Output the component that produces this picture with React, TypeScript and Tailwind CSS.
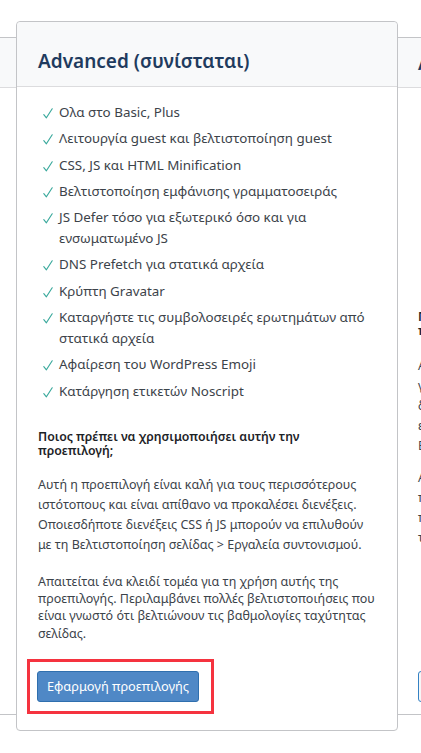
import React from "react";

const font = { fontFamily: '"Noto Sans", "Open Sans", sans-serif' };

type Item = string[];

const mainItems: Item[] = [
  ["Ολα στο Basic, Plus"],
  ["Λειτουργία guest και βελτιστοποίηση guest"],
  ["CSS, JS και HTML Minification"],
  ["Βελτιστοποίηση εμφάνισης γραμματοσειράς"],
  ["JS Defer τόσο για εξωτερικό όσο και για", "ενσωματωμένο JS"],
  ["DNS Prefetch για στατικά αρχεία"],
  ["Κρύπτη Gravatar"],
  ["Καταργήστε τις συμβολοσειρές ερωτημάτων από", "στατικά αρχεία"],
  ["Αφαίρεση του WordPress Emoji"],
  ["Κατάργηση ετικετών Noscript"],
];

const rightItems: Item[] = [
  ["Ολα στο Advanced, Plus"],
  ["Συνδυασμός CSS και JS"],
  ["Asynchronous CSS Loading"],
  ["Lazy Load για εικόνες"],
  ["Lazy Load για iframes"],
  ["Αφαίρεση Query Strings"],
  ["Κατάργηση WP Emoji"],
];

function Check() {
  return (
    <svg width="10" height="11" viewBox="0 0 10 11" className="mt-[6px]" fill="none">
      <path d="M0.8 6.6 L3.4 9.8 L9.2 0.8" stroke="#3aa99c" strokeWidth="1.15" strokeLinecap="round" strokeLinejoin="round" />
    </svg>
  );
}

function CheckList({ items }: { items: Item[] }) {
  return (
    <ul className="flex flex-col gap-[5.3px]">
      {items.map((lines) => (
        <li key={lines[0]} className="flex text-[13.4px] leading-[21px] text-[#3c434a]">
          <span className="flex w-[21px] shrink-0 pl-[5px]">
            <Check />
          </span>
          <span className="whitespace-nowrap">
            {lines.map((l, i) => (
              <React.Fragment key={i}>
                {i > 0 && <br />}
                {l}
              </React.Fragment>
            ))}
          </span>
        </li>
      ))}
    </ul>
  );
}

function Lines({ lines, className }: { lines: string[]; className: string }) {
  return (
    <p className={className}>
      {lines.map((l, i) => (
        <React.Fragment key={i}>
          {i > 0 && <br />}
          {l}
        </React.Fragment>
      ))}
    </p>
  );
}

const headingCls = "whitespace-nowrap text-[12.3px] font-semibold leading-[14.5px] text-[#1d2327]";
const paraCls = "whitespace-nowrap text-[12.5px] leading-[20px] text-[#3c434a]";
const para2Cls = "whitespace-nowrap text-[12.5px] leading-[17.4px] text-[#3c434a]";

function SideCard({ side }: { side: "left" | "right" }) {
  const isRight = side === "right";
  return (
    <div
      className={`mt-[16px] flex h-[678px] w-[382px] shrink-0 flex-col border-y border-[#c3c4c7] bg-white ${
        isRight ? "" : "ml-[-366px]"
      }`}
    >
      <div className="flex h-[50px] shrink-0 items-center border-b border-[#dcdcde] bg-[#f8f9fa] pl-[20px]">
        <h2 className="whitespace-nowrap text-[19px] font-semibold leading-[28px] text-[#1f3b5e]">
          {isRight ? "Aggressive (μπορεί να προκαλέσει διενέξεις)" : "Basic"}
        </h2>
      </div>
      <div className="flex min-h-0 flex-1 flex-col pl-[20px] pr-[20px] pt-[15px]">
        <CheckList items={rightItems} />
        <Lines className={`mt-[28px] ${headingCls}`} lines={["Ποιος πρέπει να χρησιμοποιήσει αυτήν την", "προεπιλογή;"]} />
        <Lines
          className={`mt-[17px] ${paraCls}`}
          lines={[
            "Αυτή η προεπιλογή μπορεί να λειτουργήσει αμέσως",
            "για ορισμένους ιστότοπους, αλλά φροντίστε να το",
            "δοκιμάσετε! Ορισμένες εξαιρέσεις CSS ή JS",
            "ενδέχεται να είναι απαραίτητες σε Σελίδα",
            "Βελτιστοποίηση > Ρυθμίσεις.",
          ]}
        />
        <Lines
          className={`mt-[12px] ${paraCls}`}
          lines={[
            "Απαιτείται ένα κλειδί τομέα για τη χρήση αυτής της",
            "προεπιλογής. Περιλαμβάνει πολλές βελτιστοποιήσεις",
            "που είναι γνωστό ότι βελτιώνουν τις βαθμολογίες",
            "ταχύτητας σελίδας.",
          ]}
        />
        <div className="mb-[12px] mt-auto">
          <button className="h-[31px] rounded-[3px] border border-[#3582c4] bg-[#f6f7f7] px-[10px] text-[12.8px] text-[#2271b1]">
            Εφαρμογή προεπιλογής
          </button>
        </div>
      </div>
    </div>
  );
}

export default function App() {
  return (
    <div className="h-[753px] w-[421px] overflow-hidden bg-white" style={font}>
      <div className="flex items-start pt-[21px]">
        <SideCard side="left" />
        <div className="relative z-10 flex h-[710px] w-[382px] shrink-0 flex-col rounded-[4px] border border-[#c3c4c7] bg-white">
          <div className="flex h-[65px] shrink-0 items-end rounded-t-[4px] border-b border-[#dcdcde] bg-[#f8f9fa] pb-[11px] pl-[21px]">
            <h2 className="text-[19px] font-semibold leading-[28px] text-[#1f3b5e]">Advanced (συνίσταται)</h2>
          </div>
          <div className="flex min-h-0 flex-1 flex-col pl-[21px] pr-[20px] pt-[15px]">
            <CheckList items={mainItems} />
            <Lines className={`mt-[28px] ${headingCls}`} lines={["Ποιος πρέπει να χρησιμοποιήσει αυτήν την", "προεπιλογή;"]} />
            <Lines
              className={`mt-[16px] ${paraCls}`}
              lines={[
                "Αυτή η προεπιλογή είναι καλή για τους περισσότερους",
                "ιστότοπους και είναι απίθανο να προκαλέσει διενέξεις.",
                "Οποιεσδήποτε διενέξεις CSS ή JS μπορούν να επιλυθούν",
                "με τη Βελτιστοποίηση σελίδας > Εργαλεία συντονισμού.",
              ]}
            />
            <Lines
              className={`mt-[18px] ${para2Cls}`}
              lines={[
                "Απαιτείται ένα κλειδί τομέα για τη χρήση αυτής της",
                "προεπιλογής. Περιλαμβάνει πολλές βελτιστοποιήσεις που",
                "είναι γνωστό ότι βελτιώνουν τις βαθμολογίες ταχύτητας",
                "σελίδας.",
              ]}
            />
            <div className="mb-[16px] ml-[-11px] mt-auto self-start border-[3px] border-[#f5333f] pb-[9px] pl-[7px] pr-[12px] pt-[9px]">
              <button className="h-[31px] w-[162px] rounded-[3px] border border-[#2f6fae] bg-[#4f88c6] text-[12.8px] text-white">
                Εφαρμογή προεπιλογής
              </button>
            </div>
          </div>
        </div>
        <SideCard side="right" />
      </div>
    </div>
  );
}
